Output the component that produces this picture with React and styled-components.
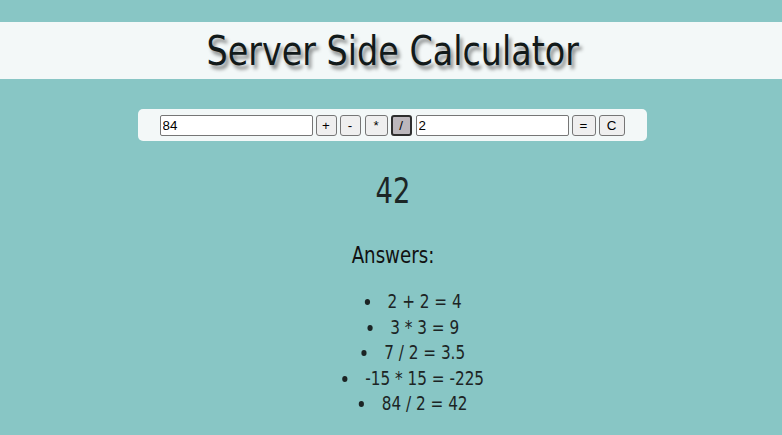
import React from "react";
import styled, { createGlobalStyle } from "styled-components";

const Global = createGlobalStyle`
  html, body { margin: 0; padding: 0; }
  body {
    background: #88c6c5;
    font-family: "DejaVu Sans Condensed", "DejaVu Sans", sans-serif;
    font-stretch: condensed;
    color: #1c2424;
  }
`;

const Page = styled.div`
  display: flex;
  flex-direction: column;
  align-items: center;
  padding-top: 22px;
`;

const Header = styled.header`
  align-self: stretch;
  height: 57px;
  background: #f3f8f8;
  display: flex;
  align-items: center;
  justify-content: center;
`;

const Title = styled.h1`
  margin: 0 0 0 3px;
  font-size: 41px;
  font-weight: 400;
  color: #121a1a;
  text-shadow: 3px 4px 4px rgba(0, 0, 0, 0.45);
  transform: scaleX(0.905);
`;

const Form = styled.form`
  margin: 30px 0 0 2px;
  width: 509px;
  height: 32px;
  box-sizing: border-box;
  background: #f3f8f8;
  border-radius: 5px;
  display: flex;
  align-items: center;
  padding-left: 22px;
  gap: 3px;
`;

const Field = styled.input`
  width: 153px;
  height: 21px;
  box-sizing: border-box;
  border: 1px solid #767676;
  border-radius: 2px;
  padding: 1px 2px;
  font: 13.33px "Liberation Sans", Arial, sans-serif;
  color: #000;
  background: #fff;
  margin-right: ${(p) => p.$mr || 0}px;
`;

const Btn = styled.button`
  height: 21px;
  width: ${(p) => p.$w || 21}px;
  box-sizing: border-box;
  border: ${(p) => (p.$active ? "2px solid #2e2e2e" : "1px solid #767676")};
  border-radius: 3px;
  background: ${(p) => (p.$active ? "#bcb7bc" : "#efefef")};
  font: 13.33px "Liberation Sans", Arial, sans-serif;
  color: #000;
  padding: 0;
  margin-right: ${(p) => p.$mr || 0}px;
`;

const Result = styled.div`
  margin: 28px 0 0 4px;
  font-size: 35px;
  line-height: 44px;
  color: #1c2626;
  transform: scaleX(0.87);
`;

const Heading = styled.h2`
  margin: 27px 0 0 4px;
  font-size: 23px;
  font-weight: 400;
  line-height: 30px;
  color: #111;
  transform: scaleX(0.88);
`;

const List = styled.ul`
  margin: 19px 0 0;
  padding: 0 0 0 52px;
  list-style-position: inside;
  text-align: center;
  transform: scaleX(0.87);
`;

const Item = styled.li`
  font-size: 19.5px;
  line-height: 25.5px;
  color: #1c2424;
`;

const answers = ["2 + 2 = 4", "3 * 3 = 9", "7 / 2 = 3.5", "-15 * 15 = -225", "84 / 2 = 42"];

export default function App() {
  return (
    <>
      <Global />
      <Page>
        <Header>
          <Title>Server Side Calculator</Title>
        </Header>
        <Form onSubmit={(e) => e.preventDefault()}>
          <Field defaultValue="84" />
          <Btn type="button">+</Btn>
          <Btn type="button" $mr={1}>-</Btn>
          <Btn type="button" $w={23}>*</Btn>
          <Btn type="button" $active $mr={1}>/</Btn>
          <Field defaultValue="2" />
          <Btn type="button" $w={24}>=</Btn>
          <Btn type="button" $w={26}>C</Btn>
        </Form>
        <Result>42</Result>
        <Heading>Answers:</Heading>
        <List>
          {answers.map((a) => (
            <Item key={a}>{a}</Item>
          ))}
        </List>
      </Page>
    </>
  );
}
